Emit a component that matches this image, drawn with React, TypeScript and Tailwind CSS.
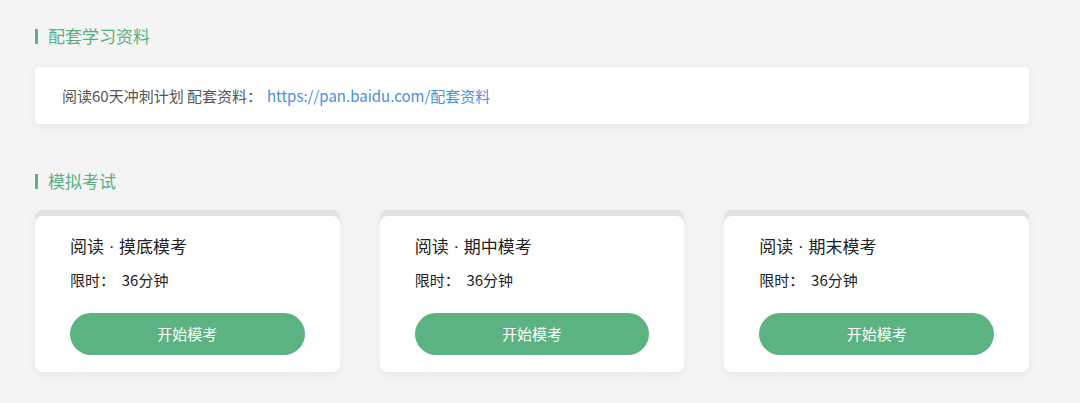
import React from 'react';

const exams = [
  { course: '阅读', name: '摸底模考', minutes: 36 },
  { course: '阅读', name: '期中模考', minutes: 36 },
  { course: '阅读', name: '期末模考', minutes: 36 },
];

function SectionTitle({ text }: { text: string }) {
  return (
    <div className="flex items-center h-[24px]">
      <span className="w-[3px] h-[15px] bg-[#58b37f] mr-[10px]"></span>
      <span className="text-[17px] text-[#58b07f] leading-[24px]">{text}</span>
    </div>
  );
}

export default function App() {
  return (
    <div
      className="w-full min-h-screen bg-[#f4f4f4] pl-[35px] pr-[51px] pt-[24px] pb-[30px]"
      style={{ fontFamily: '"Noto Sans CJK SC", "Liberation Sans", sans-serif' }}
    >
      {/* 配套学习资料 */}
      <SectionTitle text="配套学习资料" />
      <div className="mt-[19px] h-[57px] bg-white rounded-[4px] shadow-[0_2px_8px_rgba(0,0,0,0.06)] flex items-center px-[27px]">
        <span className="text-[15px] text-[#555] leading-[22px]">
          阅读60天冲刺计划 配套资料：
          <span className="ml-[5px] text-[#4a8fe0]">https://pan.baidu.com/配套资料</span>
        </span>
      </div>

      {/* 模拟考试 */}
      <div className="mt-[45px]">
        <SectionTitle text="模拟考试" />
      </div>
      <div className="mt-[17px] grid grid-cols-3 gap-[40px]">
        {exams.map((ex, i) => (
          <div
            key={i}
            className="rounded-[8px] bg-[linear-gradient(to_bottom,#e3e3e3_20px,#fff_20px)] shadow-[0_2px_10px_rgba(0,0,0,0.06)]"
          >
            <div className="mt-[6px] bg-white rounded-[8px] px-[35px] pt-[18px] pb-[17px]">
              <div className="flex items-center h-[24px] text-[17px] leading-[24px] text-[#222]">
                <span>{ex.course}</span>
                <span className="leading-none" style={{ fontFamily: '"Liberation Sans", sans-serif' }}>
                  &nbsp;·&nbsp;
                </span>
                <span>{ex.name}</span>
              </div>
              <div className="mt-[11px] text-[15px] leading-[22px] text-[#222]">
                限时：&nbsp;&nbsp;{ex.minutes}分钟
              </div>
              <button className="mt-[22px] w-full h-[42px] rounded-full bg-[#5ab380] text-white text-[15px]">
                开始模考
              </button>
            </div>
          </div>
        ))}
      </div>
    </div>
  );
}
